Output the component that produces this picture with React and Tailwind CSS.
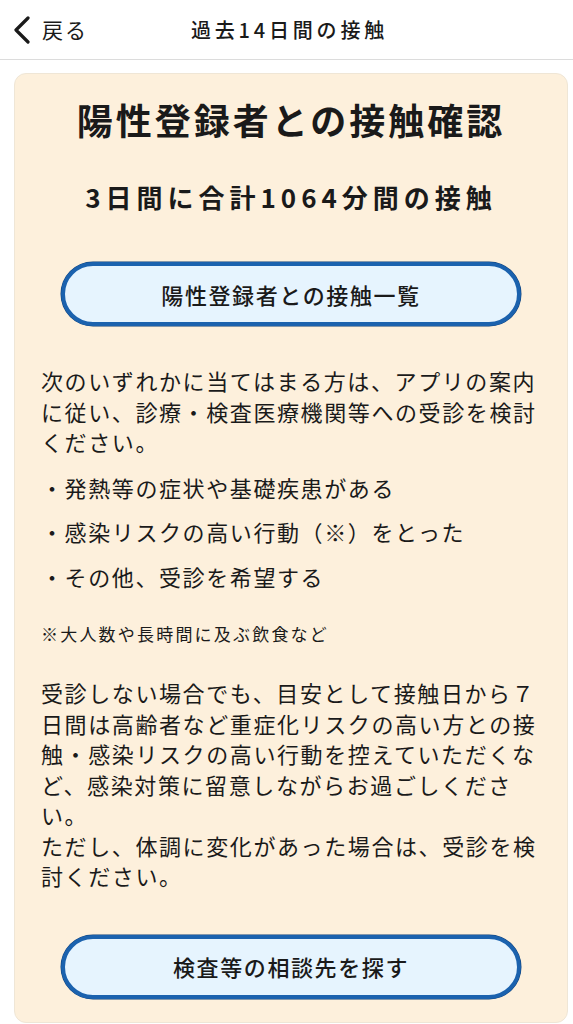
const font = { fontFamily: '"Noto Sans CJK JP", "Noto Sans", sans-serif' }

function BackChevron() {
  return (
    <svg width="18" height="28" viewBox="0 0 18 28" fill="none">
      <path d="M15 2 L3 14 L15 26" stroke="#1a1a1a" strokeWidth="3.2" strokeLinecap="round" strokeLinejoin="round" />
    </svg>
  )
}

function PillButton({ children }) {
  return (
    <button className="mx-[32px] flex h-[64px] items-center justify-center rounded-full border-[4px] border-[#1b62ae] bg-[#e6f4fe] text-[22px] font-medium tracking-[1.6px] text-[#1a1a1a] shadow-[0_0_0_0.5px_#0d3f78]">
      {children}
    </button>
  )
}

export default function App() {
  return (
    <div className="min-h-screen w-[573px] bg-white text-[#1a1a1a]" style={font}>
      {/* Header */}
      <header className="relative flex h-[60px] items-center border-b border-[#dcdcdc]">
        <div className="flex items-center gap-[11px] pl-[13px]">
          <BackChevron />
          <span className="text-[21px] tracking-[2px]">戻る</span>
        </div>
        <h1 className="absolute left-0 right-0 pl-[6px] text-center text-[20px] font-medium tracking-[3.8px] pointer-events-none">
          過去14日間の接触
        </h1>
      </header>

      {/* Card */}
      <div className="ml-[14px] mr-[5px] mt-[13px] rounded-[12px] border border-[#efe6d6] bg-[#fdf0dc] px-[14px] pt-[21px] pb-[23px]">
        <h2 className="text-center text-[36px] font-bold leading-[48px] tracking-[3px]">
          陽性登録者との接触確認
        </h2>
        <p className="mt-[36px] text-center text-[26px] font-bold leading-[36px] tracking-[5px]">
          3日間に合計1064分間の接触
        </p>

        <div className="mt-[47px] flex flex-col">
          <PillButton>陽性登録者との接触一覧</PillButton>
        </div>

        <div className="px-[12px] text-[22px] leading-[30.5px] tracking-[1.6px]">
          <p className="mt-[39px]">
            次のいずれかに当てはまる方は、アプリの案内に従い、診療・検査医療機関等への受診を検討ください。
          </p>
          <ul className="mt-[15px] flex flex-col gap-[14px]">
            <li>・発熱等の症状や基礎疾患がある</li>
            <li>・感染リスクの高い行動（※）をとった</li>
            <li>・その他、受診を希望する</li>
          </ul>
          <p className="mt-[31px] text-[17px] leading-[24px] tracking-[2.2px]">※大人数や長時間に及ぶ飲食など</p>
          <p className="mt-[31px]">
            受診しない場合でも、目安として接触日から７日間は高齢者など重症化リスクの高い方との接触・感染リスクの高い行動を控えていただくなど、感染対策に留意しながらお過ごしください。
            <br />
            ただし、体調に変化があった場合は、受診を検討ください。
          </p>
        </div>

        <div className="mt-[44px] flex flex-col">
          <PillButton>検査等の相談先を探す</PillButton>
        </div>
      </div>
    </div>
  )
}
